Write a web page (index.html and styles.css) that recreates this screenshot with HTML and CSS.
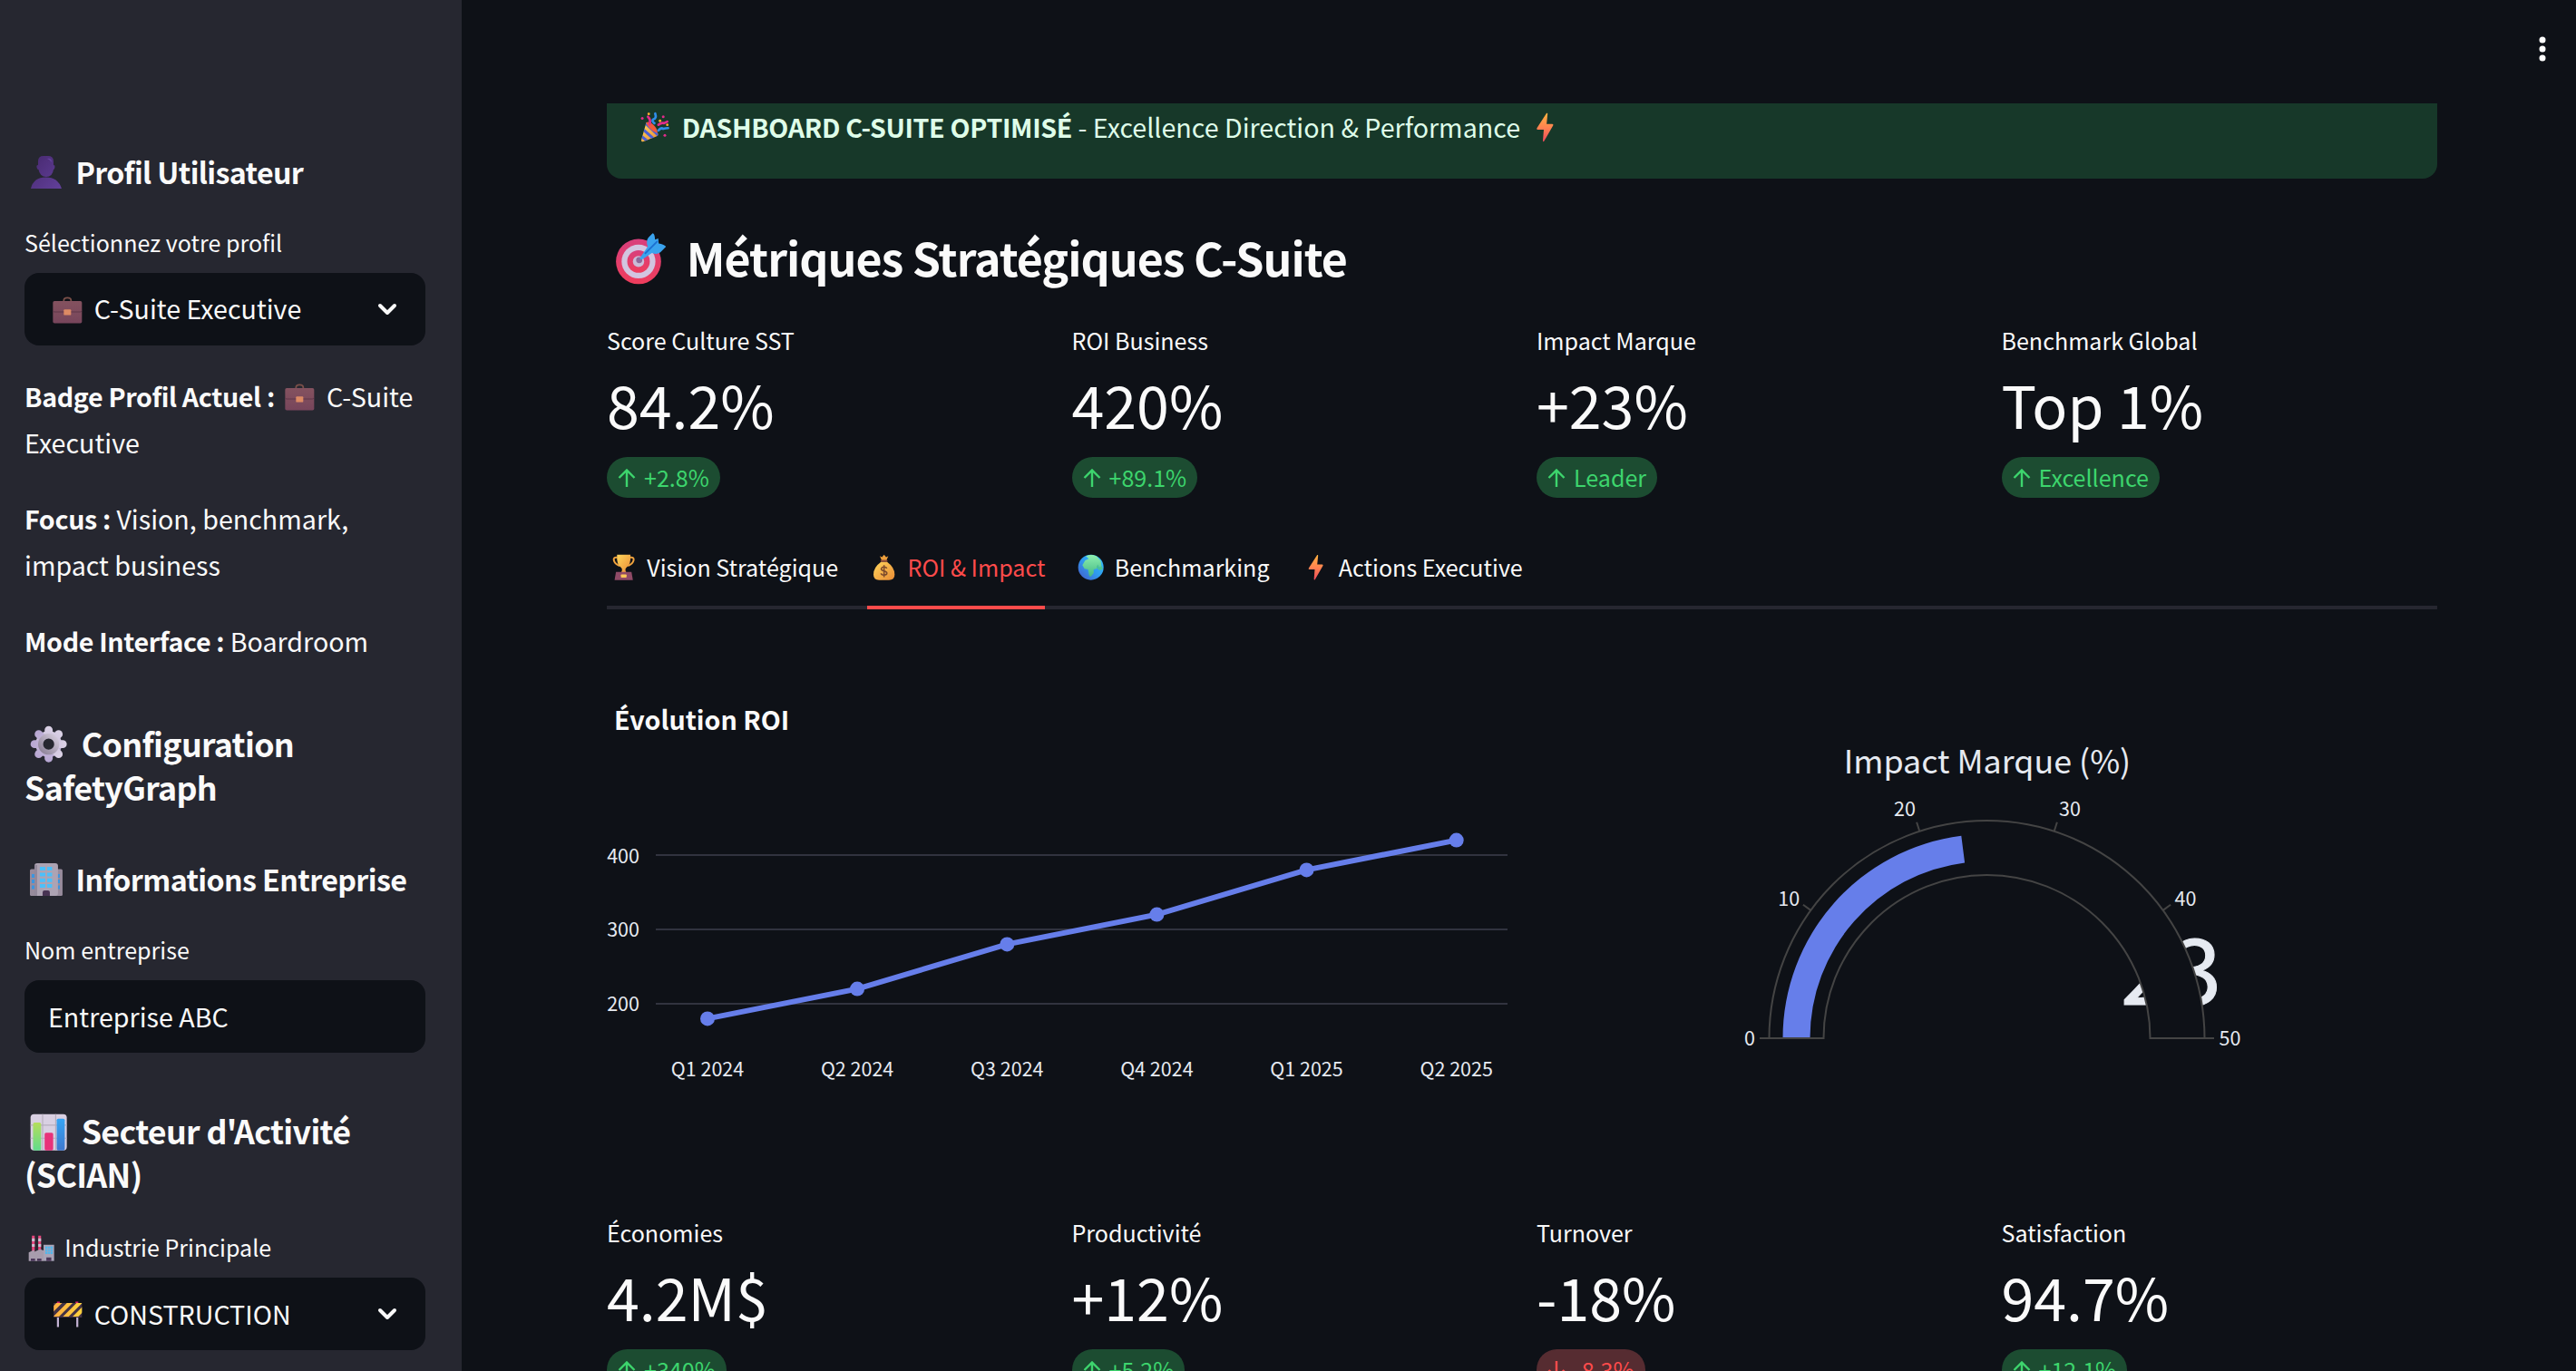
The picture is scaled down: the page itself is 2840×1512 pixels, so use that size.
FILE: index.html
```html
<!DOCTYPE html>
<html lang="fr">
<head>
<meta charset="utf-8">
<title>Dashboard C-Suite</title>
<link rel="stylesheet" href="styles.css">
</head>
<body>
<svg class="defs" width="0" height="0" aria-hidden="true">
  <defs>
    <linearGradient id="gPerson" x1="0" y1="0" x2="1" y2="1"><stop offset="0" stop-color="#47296f"/><stop offset="1" stop-color="#62409a"/></linearGradient>
    <linearGradient id="gCase" x1="0" y1="0" x2="0" y2="1"><stop offset="0" stop-color="#84525f"/><stop offset="1" stop-color="#77455b"/></linearGradient>
    <linearGradient id="gGear" x1="0" y1="0" x2="0" y2="1"><stop offset="0" stop-color="#dcd3e6"/><stop offset="1" stop-color="#b7a6d2"/></linearGradient>
    <linearGradient id="gGearIn" x1="0" y1="1" x2="1" y2="0"><stop offset="0" stop-color="#8d8298"/><stop offset="1" stop-color="#d3cadb"/></linearGradient>
    <linearGradient id="gGreen" x1="0" y1="0" x2="0" y2="1"><stop offset="0" stop-color="#b4dd5c"/><stop offset="1" stop-color="#62dd8c"/></linearGradient>
    <linearGradient id="gBlue" x1="0" y1="0" x2="0" y2="1"><stop offset="0" stop-color="#35a5f5"/><stop offset="1" stop-color="#3f78cf"/></linearGradient>
    <linearGradient id="gBolt" x1="0" y1="0" x2="0" y2="1"><stop offset="0" stop-color="#ffb23f"/><stop offset=".5" stop-color="#ff8350"/><stop offset="1" stop-color="#ef4a5c"/></linearGradient>
    <linearGradient id="gGold" x1="0" y1="0" x2="1" y2="1"><stop offset="0" stop-color="#ffd65c"/><stop offset="1" stop-color="#e98b35"/></linearGradient>
    <linearGradient id="gGlobe" x1="1" y1="0" x2="0" y2="1"><stop offset="0" stop-color="#35c4f8"/><stop offset=".5" stop-color="#2f9cf0"/><stop offset="1" stop-color="#4658c8"/></linearGradient>
    <linearGradient id="gLand" x1="0" y1="0" x2="0" y2="1"><stop offset="0" stop-color="#8ff0b0"/><stop offset="1" stop-color="#44b884"/></linearGradient>
    <linearGradient id="gRing" x1="0" y1="0" x2="0" y2="1"><stop offset="0" stop-color="#d83f7c"/><stop offset="1" stop-color="#ef3d5c"/></linearGradient>
    <linearGradient id="gStripe" gradientUnits="userSpaceOnUse" x1="0" y1="0" x2="36" y2="0"><stop offset="0" stop-color="#ffad42"/><stop offset="1" stop-color="#ffd23d"/></linearGradient>
    <clipPath id="cBoard"><path d="M1 4h35v17H1z"/></clipPath>
    <clipPath id="cCone"><path d="M7 12 21 25Q23 29 18 30L3 36Q0 36 1 33z"/></clipPath>
    <clipPath id="cGlobe"><circle cx="18" cy="18" r="18"/></clipPath>
  </defs>
  <symbol id="e-person" viewBox="-6 -6 48 48">
    <path fill="url(#gPerson)" d="M9 6Q9 0 15 0h5q6 0 6 6v4q2 0 1.500 2.500Q27 15 26 15q-1 8-8 8t-8.500-8Q8 15 7.500 12.500 7 10 9 10zM1 36Q4 23.500 17.500 23.500T35 36z"/>
    <path fill="#6f4dab" d="M19 3q5-1 5 4-2-3-5-4z" opacity=".7"/>
  </symbol>
  <symbol id="e-case" viewBox="-6 -6 48 48">
    <path fill="none" stroke="#7b5049" stroke-width="2" d="M13.500 8V7q0-3.500 4.500-3.500T22.500 7v1"/>
    <rect y="7.500" width="36" height="27.500" rx="2" fill="url(#gCase)"/>
    <path fill="#5e3749" d="M0 17.500q0 3 3 3h30q3 0 3-3v1.200q0 3-3 3H3q-3 0-3-3z"/>
    <rect x="13.500" y="18" width="9" height="7" rx="1" fill="#dd8a64"/>
  </symbol>
  <symbol id="e-gear" viewBox="-6 -6 48 48">
    <g fill="url(#gGear)">
      <circle cx="18" cy="18" r="13"/>
      <rect x="14" y="0" width="8" height="36" rx="4"/>
      <rect x="14" y="0" width="8" height="36" rx="4" transform="rotate(45 18 18)"/>
      <rect x="14" y="0" width="8" height="36" rx="4" transform="rotate(90 18 18)"/>
      <rect x="14" y="0" width="8" height="36" rx="4" transform="rotate(135 18 18)"/>
    </g>
    <circle cx="18" cy="18" r="8" fill="#262730" stroke="url(#gGearIn)" stroke-width="5"/>
  </symbol>
  <symbol id="e-office" viewBox="-6 -6 48 48">
    <rect y="6.500" width="36" height="29.500" rx="1.500" fill="#978b9c"/>
    <rect x="5" y="0" width="26" height="36" rx="3" fill="#ada3b3"/>
    <rect x="5" y="2" width="3" height="34" fill="#93899b"/>
    <path fill="#4cc0fa" d="M11 4h6v4h-6zM19 4h5.500v4H19zM11 10.500h6v4h-6zM19 10.500h5.500v4H19zM11 16.800h6v4h-6zM19 16.800h5.500v4H19zM11 23h6v4h-6zM19 23h5.500v4H19z"/>
    <path fill="#3a95e0" d="M2 12h3v4H2zM2 18h3v4H2zM2 24.500h3v4H2zM31 12h2v4h-2zM31 18h2v4h-2zM31 24.500h2v4h-2z"/>
    <path fill="#483353" d="M14 36v-4q0-2 2-2h4q2 0 2 2v4z"/>
  </symbol>
  <symbol id="e-bars" viewBox="-6 -6 48 48">
    <rect width="36" height="36" rx="3.500" fill="#d9d0e2"/>
    <path stroke="#b5adbd" stroke-width="1" d="M0 11h36M0 24h36M12 0v36M25 0v36" fill="none"/>
    <rect x="2.500" y="8.500" width="8" height="27.500" rx="1.500" fill="url(#gGreen)"/>
    <rect x="14" y="18.500" width="8.500" height="17.500" rx="1.500" fill="#e8327a"/>
    <rect x="26" y="4.500" width="8" height="31.500" rx="1.500" fill="url(#gBlue)"/>
  </symbol>
  <symbol id="e-factory" viewBox="-6 -6 48 48">
    <path fill="#e6457c" d="M4.500 0h4v24h-4zM13.500 0h4v24h-4z"/>
    <path fill="#c9bfd0" d="M4.500 4h4v4h-4zM4.500 12h4v4h-4zM13.500 4h4v4h-4zM13.500 12h4v4h-4z"/>
    <path fill="#a79cad" d="M0 24l8-4v3l8-3.500 5 1.500v15H0z"/>
    <rect x="21" y="13" width="15" height="23" fill="#a9a4b7"/>
    <rect x="23.500" y="15.500" width="10.500" height="10.500" fill="#4cb9f0"/>
    <path stroke="#a9a4b7" stroke-width=".9" d="M27 15v11M30.500 15v11M23 19h11M23 22.500h11"/>
    <path fill="#4b385a" d="M3 32.500h6V36H3zM12 32.500h6V36h-6zM25 31h7v5h-7z"/>
  </symbol>
  <symbol id="e-works" viewBox="-6 -6 48 48">
    <path fill="#c4b3d4" d="M5 21h2.500v13H5zM29 21h2.500v13H29z"/>
    <path fill="#d8286e" d="M5 2.500h3.500V5H5zM28 2.500h3.500V5H28z"/>
    <path fill="#443344" d="M1 4h35v18H1z"/>
    <g clip-path="url(#cBoard)"><path stroke="url(#gStripe)" stroke-width="5" d="M-6 18 14-2M1 24 25 0M13 24 37 0M25 24 49 0"/></g>
  </symbol>
  <symbol id="e-party" viewBox="-6 -6 48 48">
    <path fill="url(#gGold)" d="M7 12 21 25Q23 29 18 30L3 36Q0 36 1 33z"/>
    <g clip-path="url(#cCone)"><path stroke="#4a5fd6" stroke-width="3.500" fill="none" d="M-2 27 12 38M1 19 18 34M6 13 24 30"/></g>
    <path fill="#f05a3c" d="M7 12q4-2 9 3t5 10q-4 0-9-5t-5-8z"/>
    <path fill="none" stroke="#2f8ee8" stroke-width="3" stroke-linecap="round" d="M17 13q-4-3-1-5 4-1 2-7M22 22q3-4 6-2 3-1 6-1"/>
    <path fill="none" stroke="#e22b8b" stroke-width="3" stroke-linecap="round" d="M9 5q4 4 2 9M22 15q4-3 7-2l4-2"/>
    <g fill="#e22b8b"><circle cx="2" cy="7" r="1.700"/><circle cx="28" cy="5" r="1.700"/><circle cx="30" cy="28" r="1.700"/></g>
    <g fill="#ffb02e"><circle cx="10" cy="1.500" r="1.600"/><circle cx="33" cy="15" r="1.500"/><circle cx="24" cy="10" r="1.600"/></g>
  </symbol>
  <symbol id="e-bolt" viewBox="-6 -6 48 48">
    <path fill="url(#gBolt)" d="M20 .5Q21.500 0 21.200 2L20 14h7q2 0 1 2L17 35q-1.500 2-1.600-.5L16.500 21H9q-2 0-1-2z"/>
  </symbol>
  <symbol id="e-target" viewBox="-6 -6 48 48">
    <circle cx="16.500" cy="20" r="16" fill="url(#gRing)"/>
    <circle cx="16.500" cy="20" r="12" fill="#d2c5e0"/>
    <circle cx="16.500" cy="20" r="8" fill="url(#gRing)"/>
    <circle cx="16.500" cy="20" r="4" fill="#c9bdd8"/>
    <circle cx="17" cy="19" r="2.200" fill="#8d6a9a"/>
    <path fill="#3aa3ee" d="M17.500 17.500 23 9.500q-1.500-4 .5-6.500L26.500 0q1.500 0 1.700 4.500l2.300-.8.300 3.500q3.500.3 5.200 2.300l-4 4q-2.500 2-6 .5l-6 4q-3 1.500-2.500-.5z"/>
    <path stroke="#1c6fd0" stroke-width="1.200" fill="none" d="M21 14.500 30 5.500"/>
  </symbol>
  <symbol id="e-trophy" viewBox="-6 -6 48 48">
    <path fill="none" stroke="#f0a23d" stroke-width="2.600" d="M9 4Q3 3 4 8t8 8M27 4q6-1 5 4t-8 8"/>
    <path fill="url(#gGold)" d="M8.500 0h19q1 14-5.500 18l-1.500 2v3q0 2 3 3H12.500q3-1 3-3v-3L14 18Q7.500 14 8.500 0z"/>
    <path fill="#8f4a66" d="M7 24.500h22L31 36H5z"/>
    <rect x="14" y="28" width="8" height="4.500" rx="1" fill="#ffc758"/>
  </symbol>
  <symbol id="e-money" viewBox="-6 -6 48 48">
    <path fill="#eea03c" d="M12 2l3 1.500L18 0l3 3.500L24 2l-3 7h-6z"/>
    <path fill="url(#gGold)" d="M14 10h8q11 8 11 18 0 8-8 8H11q-8 0-8-8 0-10 11-18z"/>
    <rect x="13" y="7.500" width="10" height="3" rx="1.500" fill="#8b4b3a"/>
    <path fill="none" stroke="#7c4a2c" stroke-width="2" d="M22 19.500q-1-2-4-2t-4 2.500q0 2.500 4 3.200t4 3.300q0 2.500-4 2.500t-4.200-2.500M18 15v17"/>
  </symbol>
  <symbol id="e-globe" viewBox="-6 -6 48 48">
    <circle cx="18" cy="18" r="18" fill="url(#gGlobe)"/>
    <g clip-path="url(#cGlobe)"><path fill="url(#gLand)" d="M11 2q8-4 15 0l6 7 1 8-3 1-2-3-2 5-4 1 0 5-4 5q-3 0-3-5l-1-5-5-1-3-5 4-7 5-2z"/><path fill="#4cc490" d="M26 17l2-3 2 5 3-3 2 4-3 2-4-1z"/></g>
  </symbol>
  <symbol id="i-chevron" viewBox="0 0 24 16"><path d="M4 4l8 8 8-8" fill="none" stroke="#fafafa" stroke-width="4" stroke-linecap="round" stroke-linejoin="round"/></symbol>
  <symbol id="i-up" viewBox="0 0 20 20"><path d="M10 20V2M1.500 10 10 1.500 18.500 10" fill="none" stroke="currentColor" stroke-width="2.400"/></symbol>
  <symbol id="i-down" viewBox="0 0 20 20"><path d="M10 0v18M1.500 10l8.500 8.500 8.500-8.500" fill="none" stroke="currentColor" stroke-width="2.400"/></symbol>
</svg>

<div class="app">
  <aside class="sidebar">
    <h3 class="title-sm"><svg class="emoji"><use href="#e-person"/></svg> Profil Utilisateur</h3>
    <label class="label label-profile">Sélectionnez votre profil</label>
    <div class="field select"><span><svg class="emoji"><use href="#e-case"/></svg> C-Suite Executive</span><svg class="chevron"><use href="#i-chevron"/></svg></div>
    <div class="profile-info">
      <p><b>Badge Profil Actuel :</b> <svg class="emoji"><use href="#e-case"/></svg> C-Suite Executive</p>
      <p><b>Focus :</b> Vision, benchmark, impact business</p>
      <p><b>Mode Interface :</b> Boardroom</p>
    </div>
    <h2 class="title-md title-config"><svg class="emoji"><use href="#e-gear"/></svg> Configuration SafetyGraph</h2>
    <h3 class="title-sm title-company"><svg class="emoji"><use href="#e-office"/></svg> Informations Entreprise</h3>
    <label class="label label-company">Nom entreprise</label>
    <div class="field input">Entreprise ABC</div>
    <h2 class="title-md title-sector"><svg class="emoji"><use href="#e-bars"/></svg> Secteur d'Activité (SCIAN)</h2>
    <label class="label label-industry"><svg class="emoji"><use href="#e-factory"/></svg> Industrie Principale</label>
    <div class="field select"><span><svg class="emoji"><use href="#e-works"/></svg> CONSTRUCTION</span><svg class="chevron"><use href="#i-chevron"/></svg></div>
  </aside>

  <main class="main">
    <header class="topbar">
      <svg class="menu" viewBox="0 0 8 28"><g fill="#fff"><circle cx="4" cy="4" r="3.500"/><circle cx="4" cy="14" r="3.500"/><circle cx="4" cy="24" r="3.500"/></g></svg>
    </header>
    <div class="content">
      <div class="banner"><svg class="emoji"><use href="#e-party"/></svg> <b>DASHBOARD C-SUITE OPTIMISÉ</b> - Excellence Direction &amp; Performance <svg class="emoji"><use href="#e-bolt"/></svg></div>
      <h1 class="title-lg"><svg class="emoji"><use href="#e-target"/></svg> Métriques Stratégiques C-Suite</h1>

      <section class="metrics metrics-top">
        <div class="metric"><div class="label">Score Culture SST</div><div class="value">84.2%</div><div class="pill"><svg class="arrow"><use href="#i-up"/></svg>+2.8%</div></div>
        <div class="metric"><div class="label">ROI Business</div><div class="value">420%</div><div class="pill"><svg class="arrow"><use href="#i-up"/></svg>+89.1%</div></div>
        <div class="metric"><div class="label">Impact Marque</div><div class="value">+23%</div><div class="pill"><svg class="arrow"><use href="#i-up"/></svg>Leader</div></div>
        <div class="metric"><div class="label">Benchmark Global</div><div class="value">Top 1%</div><div class="pill"><svg class="arrow"><use href="#i-up"/></svg>Excellence</div></div>
      </section>

      <nav class="tabs">
        <div class="tab"><svg class="emoji"><use href="#e-trophy"/></svg> Vision Stratégique</div>
        <div class="tab active"><svg class="emoji"><use href="#e-money"/></svg> ROI &amp; Impact</div>
        <div class="tab"><svg class="emoji"><use href="#e-globe"/></svg> Benchmarking</div>
        <div class="tab"><svg class="emoji"><use href="#e-bolt"/></svg> Actions Executive</div>
      </nav>

      <section class="charts">
        <svg class="chart" viewBox="669 704 993 600">
          <text class="chart-title" x="677" y="805">Évolution ROI</text>
          <g class="grid"><path d="M723 943H1662M723 1025H1662M723 1107H1662"/></g>
          <g class="tick end"><text x="705" y="951.700">400</text><text x="705" y="1033">300</text><text x="705" y="1115">200</text></g>
          <g class="tick mid"><text x="780" y="1186.700">Q1 2024</text><text x="945.100" y="1186.700">Q2 2024</text><text x="1110.300" y="1186.700">Q3 2024</text><text x="1275.400" y="1186.700">Q4 2024</text><text x="1440.500" y="1186.700">Q1 2025</text><text x="1605.700" y="1186.700">Q2 2025</text></g>
          <path class="line" d="M780 1123.400 945.100 1090.600 1110.300 1041.400 1275.400 1008.600 1440.500 959.400 1605.700 926.600"/>
          <g class="dots"><circle cx="780" cy="1123.400" r="8"/><circle cx="945.100" cy="1090.600" r="8"/><circle cx="1110.300" cy="1041.400" r="8"/><circle cx="1275.400" cy="1008.600" r="8"/><circle cx="1440.500" cy="959.400" r="8"/><circle cx="1605.700" cy="926.600" r="8"/></g>
        </svg>
        <svg class="chart" viewBox="1694 704 993 600">
          <text class="gauge-title" x="2191" y="852.700">Impact Marque (%)</text>
          <text class="gauge-number" x="2393.500" y="1108">23</text>
          <path class="gauge-band" d="M1950.500 1145A240 240 0 0 1 2430.500 1145H2370.500A180 180 0 0 0 2010.500 1145Z"/>
          <path class="gauge-bar" d="M1965.500 1145A225 225 0 0 1 2162.300 921.800L2166.100 951.500A195 195 0 0 0 1995.500 1145Z"/>
          <path class="gauge-outline" d="M1950.500 1145A240 240 0 0 1 2430.500 1145H2370.500A180 180 0 0 0 2010.500 1145Z"/>
          <path class="gauge-outline" d="M1950.500 1145H1940M2430.500 1145H2441M1996.300 1003.900 1987.900 997.800M2116.300 916.700 2113.100 906.800M2264.700 916.700 2267.900 906.800M2384.700 1003.900 2393.100 997.800"/>
          <g class="tick mid"><text x="1929" y="1153">0</text><text x="1972.300" y="999">10</text><text x="2100" y="900">20</text><text x="2282" y="900">30</text><text x="2409.400" y="999">40</text><text x="2458.400" y="1153">50</text></g>
        </svg>
      </section>

      <section class="metrics metrics-bottom">
        <div class="metric"><div class="label">Économies</div><div class="value">4.2M$</div><div class="pill"><svg class="arrow"><use href="#i-up"/></svg>+340%</div></div>
        <div class="metric"><div class="label">Productivité</div><div class="value">+12%</div><div class="pill"><svg class="arrow"><use href="#i-up"/></svg>+5.2%</div></div>
        <div class="metric"><div class="label">Turnover</div><div class="value">-18%</div><div class="pill down"><svg class="arrow"><use href="#i-down"/></svg>-8.3%</div></div>
        <div class="metric"><div class="label">Satisfaction</div><div class="value">94.7%</div><div class="pill"><svg class="arrow"><use href="#i-up"/></svg>+12.1%</div></div>
      </section>
    </div>
  </main>
</div>
</body>
</html>
```
FILE: styles.css
```css
* { box-sizing: border-box; }
html, body { margin: 0; height: 1512px; overflow: hidden; background: #0e1117; }
body {
  font-family: "Noto Sans CJK JP", "Noto Sans CJK SC", "Noto Sans", sans-serif;
  font-size: 28.65px;
  line-height: 51.2px;
  color: #fafafa;
}
h1, h2, h3, p { margin: 0; font-weight: 700; }
h1, h2, h3 { letter-spacing: -.0195em; }
p { font-weight: 400; }
b { letter-spacing: -.0125em; }
.defs { display: block; position: absolute; }

.app { display: flex; width: 2840px; height: 1512px; overflow: hidden; }

.emoji {
  width: 1.489em;
  height: 1.489em;
  margin: -.4em .055em -.352em 0;
  vertical-align: baseline;
}

/* Sidebar */
.sidebar {
  flex: none;
  width: 509px;
  height: 1512px;
  padding: 168px 40px 0 27px;
  background: #262730;
}
.title-sm { font-size: 32.2px; line-height: 43.2px; white-space: nowrap; }
.title-md { font-size: 35.8px; line-height: 48px; }
.label { display: block; font-size: 25.07px; line-height: 40px; white-space: nowrap; }
.label-profile { margin: 35.800px 0 14px; }
.field {
  display: flex;
  align-items: center;
  height: 80px;
  padding-bottom: 2px;
  border-radius: 16px;
  background: #0e1117;
  white-space: nowrap;
}
.select { justify-content: space-between; padding: 0 30px 2px 26px; }
.input { padding-left: 26px; }
.chevron { width: 24px; height: 16px; margin-top: 2px; }
.profile-info { display: flex; flex-direction: column; gap: 32.500px; margin-top: 30px; }
.title-config { margin-top: 63px; }
.title-company { margin-top: 57px; }
.label-company { margin: 36px 0 14px; }
.title-sector { margin-top: 61px; }
.label-industry { margin: 37px 0 14px; }

/* Main column */
.main { flex: 1; }
.topbar { display: flex; justify-content: flex-end; height: 114px; padding: 40px 33px 0 0; }
.menu { width: 8px; height: 28px; }
.content { width: 2018px; margin-left: 160px; }
.banner {
  height: 83px;
  padding-left: 32px;
  border-radius: 0 0 16px 16px;
  background: #173829;
  color: #dffde9;
}
.title-lg { margin-top: 52.500px; font-size: 50.1px; line-height: 67.2px; }

.metrics { display: grid; grid-template-columns: repeat(4, 1fr); column-gap: 32px; }
.metrics-top { margin-top: 38.300px; }
.metrics-bottom { margin-top: 35px; }
.value { margin-top: 5px; font-size: 64.5px; line-height: 90px; }
.pill {
  display: flex;
  align-items: center;
  width: max-content;
  height: 45px;
  margin-top: 14px;
  padding: 0 12px 2px;
  border-radius: 23px;
  background: #1c4c31;
  color: #3dd56d;
  font-size: 25.07px;
  line-height: 40px;
}
.pill.down { background: #562c31; color: #ff4b4b; }
.arrow { width: 20px; height: 20px; margin: 2px 9px 0 0; }

.tabs { display: flex; gap: 32px; height: 67px; margin-top: 56px; border-bottom: 4px solid #262730; }
.tab { height: 67px; font-size: 25.07px; line-height: 40px; }
.tab.active { color: #ff4b4b; border-bottom: 4px solid #ff4b4b; }

/* Charts */
.charts { display: grid; grid-template-columns: 1fr 1fr; column-gap: 32px; margin-top: 32px; }
.chart { display: block; width: 993px; height: 600px; }
.chart text { fill: #e6eaf1; }
.chart .chart-title { font-size: 28.65px; font-weight: 700; fill: #fafafa; }
.grid path { stroke: #31333f; stroke-width: 2; }
.tick { font-size: 21.5px; }
.end { text-anchor: end; }
.mid { text-anchor: middle; }
.line { fill: none; stroke: #667eea; stroke-width: 6; }
.dots circle { fill: #667eea; }
.gauge-title { font-size: 35.8px; text-anchor: middle; }
.gauge-number { font-size: 100.3px; text-anchor: middle; }
.chart .gauge-number { stroke: #e6eaf1; stroke-width: 1; }
.gauge-band { fill: #0e1117; }
.gauge-bar { fill: #667eea; }
.gauge-outline { fill: none; stroke: #444; stroke-width: 2; }
```
